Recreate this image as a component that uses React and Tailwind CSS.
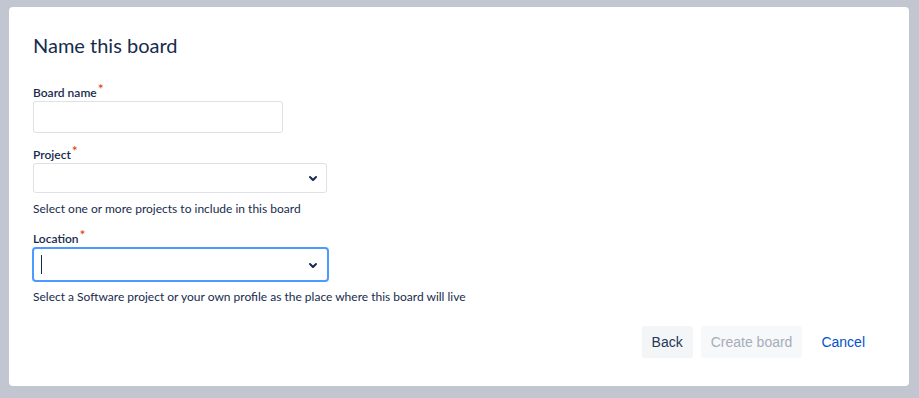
import React from "react";

function Chevron() {
  return (
    <svg width="24" height="24" viewBox="0 0 24 24" className="text-[#172b4d]">
      <path
        fill="currentColor"
        fillRule="evenodd"
        d="M8.292 10.293a1.009 1.009 0 000 1.419l2.939 2.965c.218.215.5.322.779.322s.556-.107.769-.322l2.93-2.955a1.01 1.01 0 000-1.419.987.987 0 00-1.406 0l-2.298 2.317-2.307-2.327a.99.99 0 00-1.406 0z"
      />
    </svg>
  );
}

function Label({ children }) {
  return (
    <div className="text-[12px] leading-[16px] font-semibold text-[#172b4d] flex items-start">
      <span>{children}</span>
      <span className="text-[#de350b] text-[14px] leading-[10px] font-normal ml-[1px] -mt-[1px]">*</span>
    </div>
  );
}

export default function App() {
  return (
    <div className="w-[919px] h-[398px] bg-[#c1c6d0] pt-[7px] pl-[9px] font-['Lato',sans-serif]">
      <div className="w-[900px] h-[379px] bg-white rounded-[4px] px-6 pt-[26px] flex flex-col">
        <h1 className="text-[20px] leading-[24px] font-normal text-[#172b4d]">
          Name this board
        </h1>

        <div className="mt-[28px]">
          <Label>Board name</Label>
          <div className="w-[250px] h-[32px] border border-[#dfe1e6] rounded-[3px] bg-white" />
        </div>

        <div className="mt-[14px]">
          <Label>Project</Label>
          <div className="w-[294px] h-[30px] border border-[#dfe1e6] rounded-[3px] bg-white flex items-center justify-end pr-[1px]">
            <Chevron />
          </div>
          <div className="mt-[8px] text-[12px] leading-[16px] text-[#172b4d]">
            Select one or more projects to include in this board
          </div>
        </div>

        <div className="mt-[14px]">
          <Label>Location</Label>
          <div className="-ml-[1px] w-[297px] h-[35px] border-[2.5px] border-[#4c9aff] rounded-[4px] bg-white flex items-center justify-between pl-[7px] pr-[2px]">
            <div className="w-[1px] h-[19px] bg-[#172b4d]" />
            <Chevron />
          </div>
          <div className="mt-[7px] text-[12px] leading-[16px] text-[#172b4d]">
            Select a Software project or your own profile as the place where this board will live
          </div>
        </div>

        <div className="mt-[21px] flex justify-end items-center gap-2 pr-[10px] text-[14px] font-['Liberation_Sans',Arial,sans-serif]">
          <button className="h-[32px] px-[10px] rounded-[3px] bg-[#f4f5f7] text-[#253858]">
            Back
          </button>
          <button className="h-[32px] px-[10px] rounded-[3px] bg-[#f7f8f9] text-[#a5adba]">
            Create board
          </button>
          <button className="h-[32px] px-[10px] rounded-[3px] text-[#0052cc] ml-[1px]">
            Cancel
          </button>
        </div>
      </div>
    </div>
  );
}
